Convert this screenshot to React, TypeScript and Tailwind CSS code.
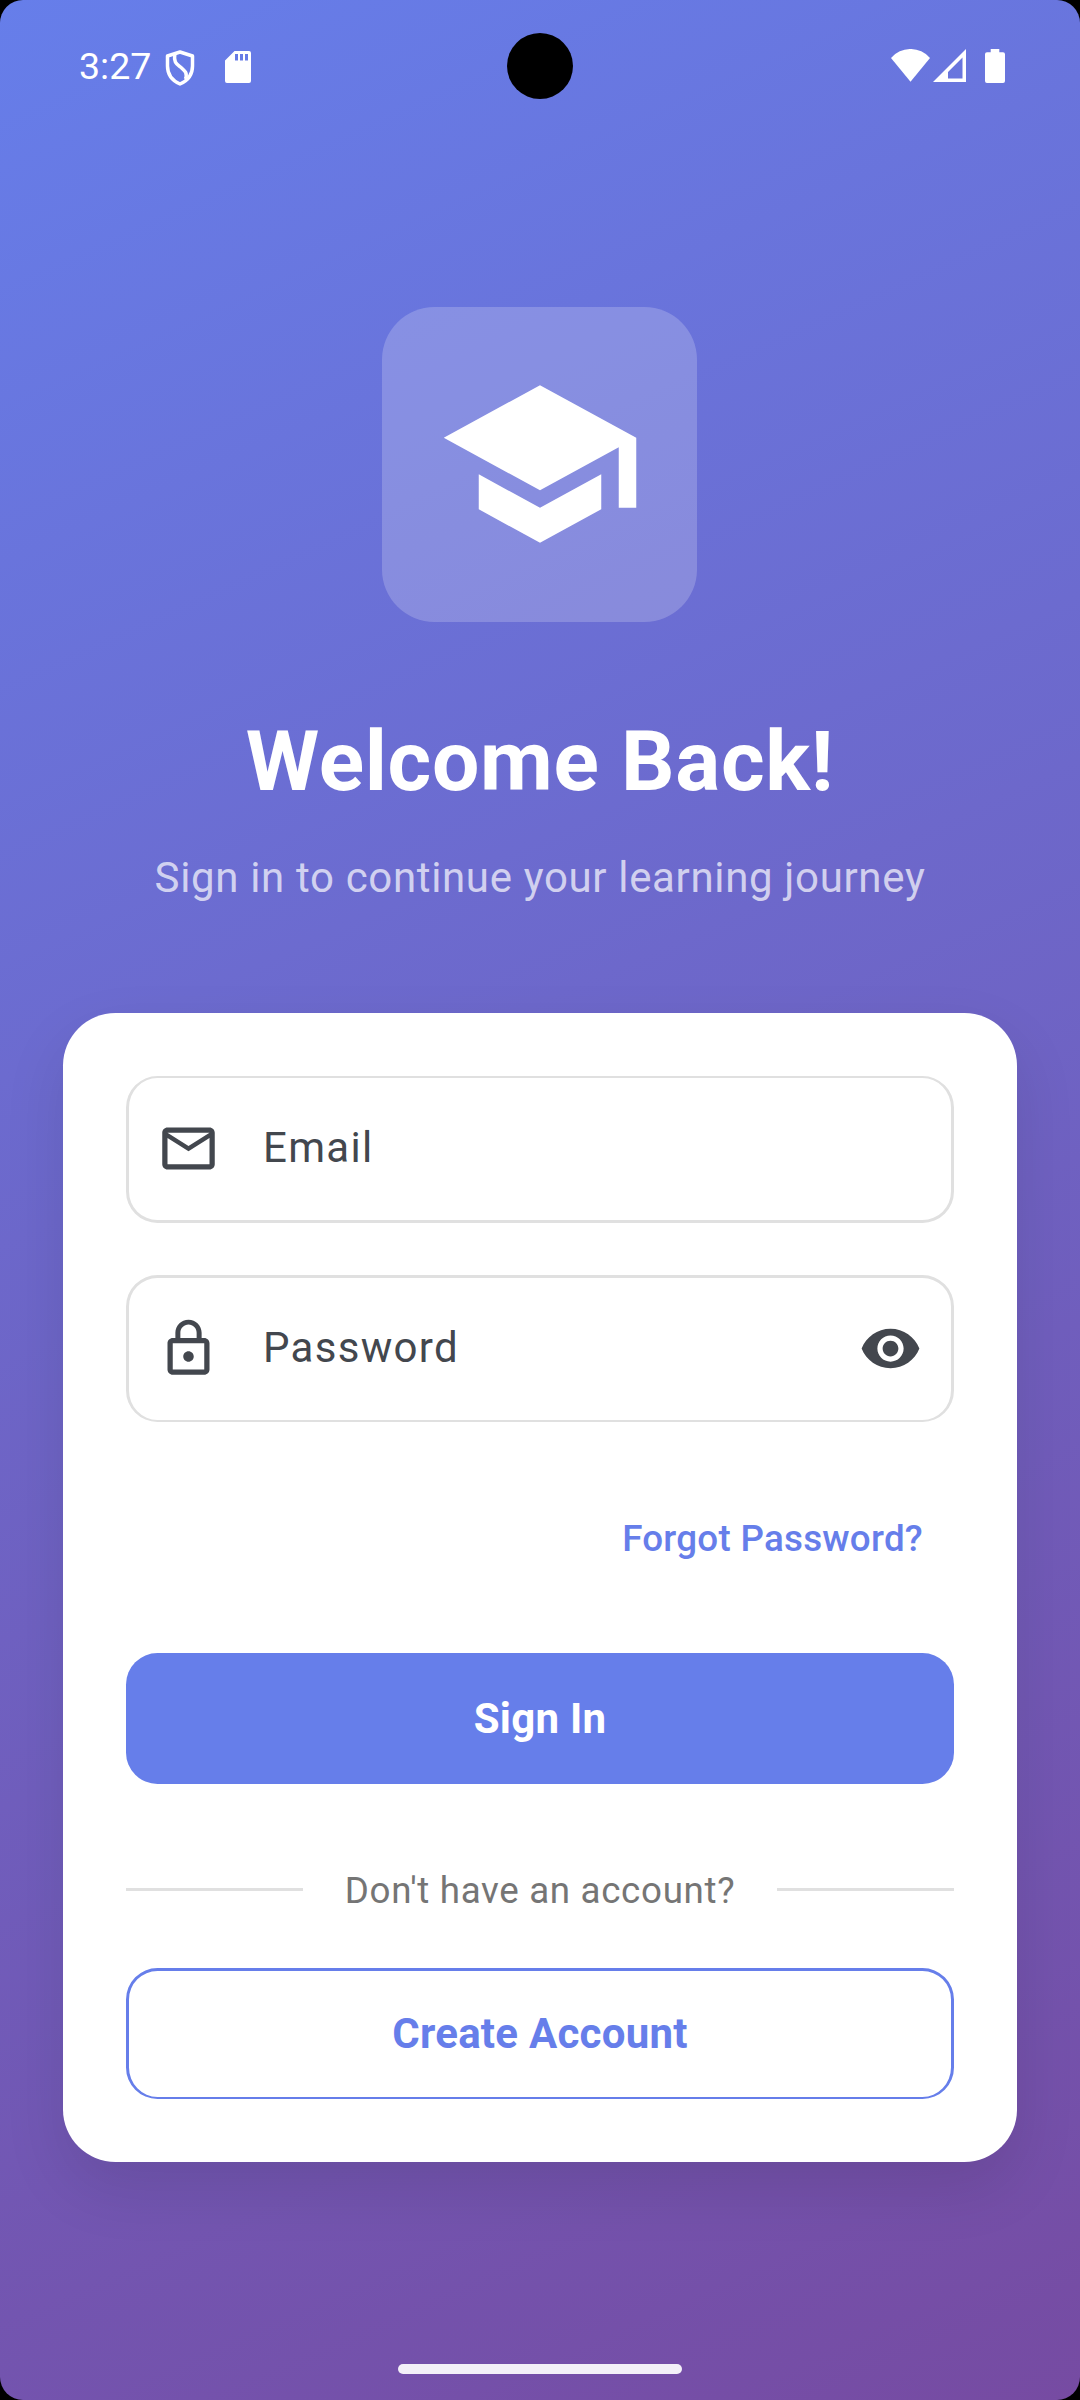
import React from "react";

type IconProps = { d: string; className: string };

function Icon({ d, className }: IconProps) {
  return (
    <svg viewBox="0 0 24 24" fill="currentColor" className={className}>
      <path d={d} />
    </svg>
  );
}

const SCHOOL = "M5 13.18v4L12 21l7-3.82v-4L12 17l-7-3.82zM12 3L1 9l11 6 9-4.91V17h2V9L12 3z";
const MAIL =
  "M22 6c0-1.1-.9-2-2-2H4c-1.1 0-2 .9-2 2v12c0 1.1.9 2 2 2h16c1.1 0 2-.9 2-2V6zm-2 0l-8 5-8-5h16zm0 12H4V8l8 5 8-5v10z";
const LOCK =
  "M12 17c1.1 0 2-.9 2-2s-.9-2-2-2-2 .9-2 2 .9 2 2 2zm6-9h-1V6c0-2.76-2.24-5-5-5S7 3.24 7 6v2H6c-1.1 0-2 .9-2 2v10c0 1.1.9 2 2 2h12c1.1 0 2-.9 2-2V10c0-1.1-.9-2-2-2zM8.9 6c0-1.71 1.39-3.1 3.1-3.1s3.1 1.39 3.1 3.1v2H8.9V6zM18 20H6V10h12v10z";
const EYE =
  "M12 4.5C7 4.5 2.73 7.61 1 12c1.73 4.39 6 7.5 11 7.5s9.27-3.11 11-7.5c-1.73-4.39-6-7.5-11-7.5zM12 17c-2.76 0-5-2.24-5-5s2.24-5 5-5 5 2.24 5 5-2.24 5-5 5zm0-8c-1.66 0-3 1.34-3 3s1.34 3 3 3 3-1.34 3-3-1.34-3-3-3z";

function StatusBar() {
  return (
    <header className="relative flex h-[132px] items-start pl-[79px] pr-[75px] pt-[49px] text-white">
      <span className="-mt-[5px] text-[37.5px] leading-[44px]">3:27</span>
      <svg viewBox="0 0 30 36" className="ml-[14px] mt-px h-9 w-[30px]" fill="none" stroke="currentColor" strokeWidth="3.5">
        <path d="M15 2 L27.500 6 V16 C27.500 25 22 31 15 34 C8 31 2.500 25 2.500 16 V6 Z" strokeLinejoin="round" />
        <path d="M9.800 4 C8.500 13 12 14 15.500 17 C20.500 21.500 22.500 23 20.500 29" />
      </svg>
      <svg viewBox="0 0 26 32" className="ml-[30px] mt-0.5 h-8 w-[26px]" fill="currentColor">
        <path
          fillRule="evenodd"
          d="M9.500 0H24a2 2 0 0 1 2 2V30a2 2 0 0 1-2 2H2a2 2 0 0 1-2-2V9.500ZM10 3V9.500H13V3ZM15 3V9.500H18V3ZM20 3V9.500H23V3Z"
        />
      </svg>
      <div className="absolute left-1/2 top-[33px] size-[66px] -translate-x-1/2 rounded-full bg-black" />
      <svg viewBox="0 0 39 33" className="ml-auto h-[33px] w-[39px]" fill="currentColor">
        <path d="M0 9 A25.600 25.600 0 0 1 39 9 L19.500 32.700Z" />
      </svg>
      <svg viewBox="0 0 33 33" className="ml-[3px] h-[33px] w-[33px]" fill="currentColor">
        <path fillRule="evenodd" d="M33 0V33H0ZM29.500 8.500L15 23V29.500H29.500Z" />
      </svg>
      <svg viewBox="0 0 20 34" className="ml-[19px] h-[34px] w-5" fill="currentColor">
        <path d="M5.700 0H14.300V3.300H18a2 2 0 0 1 2 2V32a2 2 0 0 1-2 2H2a2 2 0 0 1-2-2V5.300a2 2 0 0 1 2-2H5.700Z" />
      </svg>
    </header>
  );
}

export default function App() {
  return (
    <div className="h-[2400px] w-[1080px] bg-black font-['Roboto',sans-serif]">
      <main className="flex h-full flex-col overflow-hidden rounded-[23px] bg-[linear-gradient(155.772deg,#667eea,#764ba2)]">
        <StatusBar />

        <section className="flex h-[881px] flex-col items-center pt-[175px]">
          <div className="mr-px flex size-[315px] items-start rounded-[52.5px] bg-white/20 pl-[53px] pt-[52px]">
            <Icon d={SCHOOL} className="size-[210px] text-white" />
          </div>
          <h1 className="mt-[87px] text-[84px] font-bold leading-[105px] tracking-[0.65625px] text-white">Welcome Back!</h1>
          <p className="mt-8 text-[42px] leading-[63px] tracking-[0.65625px] text-white/70">
            Sign in to continue your learning journey
          </p>
        </section>

        <section className="mx-[63px] flex h-[1149px] flex-col rounded-[52.5px] bg-white px-[63px] pt-[63px] shadow-[0_26px_62px_rgba(0,0,0,0.1)]">
          <label className="flex h-[147px] items-center rounded-[31.5px] border-x-3 border-b-3 border-t-2 border-[#e0e0e0] pl-7 text-[#43474e]">
            <Icon d={MAIL} className="mb-px size-[63px]" />
            <span className="ml-[43px] pb-[3px] text-[42px] leading-[63px] tracking-[1.3125px]">Email</span>
          </label>

          <label className="mt-[52px] flex h-[147px] items-center rounded-[31.5px] border-x-3 border-b-2 border-t-3 border-[#e0e0e0] pl-7 pr-[29px] text-[#43474e]">
            <Icon d={LOCK} className="mb-0.5 size-[63px]" />
            <span className="ml-[43px] pb-[3px] text-[42px] leading-[63px] tracking-[1.3125px]">Password</span>
            <Icon d={EYE} className="mb-px ml-auto size-[63px]" />
          </label>

          <a className="mt-[90px] self-end pr-[31px] text-[36.75px] font-medium leading-[53px] tracking-[0.2625px] text-[#667eea]">
            Forgot Password?
          </a>

          <button className="mt-[88px] h-[131px] rounded-[31.5px] bg-[#667eea] text-[42px] font-bold tracking-[0.2625px] text-white">
            Sign In
          </button>

          <div className="mt-[79px] flex h-[53px] items-center gap-[42px]">
            <div className="h-[3px] flex-1 bg-[#e0e0e0]" />
            <span className="pt-0.5 text-[36.75px] leading-[53px] tracking-[0.65625px] text-[#757575]">Don't have an account?</span>
            <div className="h-[3px] flex-1 bg-[#e0e0e0]" />
          </div>

          <button className="mt-[52px] h-[131px] rounded-[31.5px] border-x-3 border-b-2 border-t-3 border-[#667eea] pb-0.5 text-[42px] font-bold tracking-[0.2625px] text-[#667eea]">
            Create Account
          </button>
        </section>

        <div className="mx-auto mb-[26px] mt-auto h-[10px] w-[284px] rounded-full bg-[#f3f0f8]" />
      </main>
    </div>
  );
}
